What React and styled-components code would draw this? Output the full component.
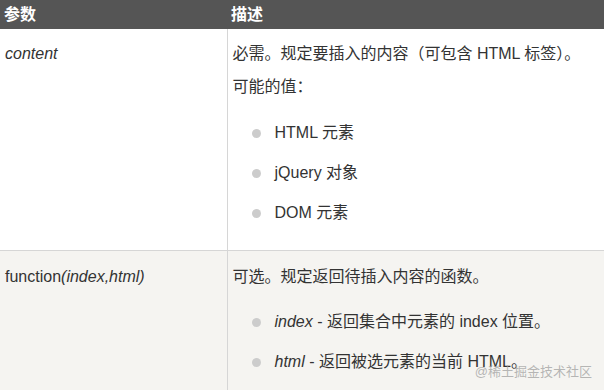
import React from "react";
import styled, { createGlobalStyle } from "styled-components";

const Global = createGlobalStyle`
  html, body { margin: 0; padding: 0; background: #ffffff; }
  body {
    font-family: "Liberation Sans", Arial, "Noto Sans CJK SC", sans-serif;
    font-size: 16px;
    color: #333333;
    overflow: hidden;
  }
`;

const Page = styled.div`
  position: relative;
  width: 604px;
  height: 390px;
  overflow: hidden;
`;

const Table = styled.table`
  width: 604px;
  border-collapse: collapse;
  table-layout: fixed;
`;

const HeadCell = styled.th`
  box-sizing: border-box;
  background: #555555;
  color: #ffffff;
  font-weight: bold;
  text-align: left;
  line-height: 24px;
  padding: 3px 4px 2px;
  width: ${(p) => p.$w || "auto"};
`;

const Row = styled.tr`
  background: ${(p) => (p.$alt ? "#f5f4f1" : "#ffffff")};
  border-bottom: 1px solid #d6d6d6;
`;

const Cell = styled.td`
  vertical-align: top;
  line-height: 24px;
  padding: ${(p) => p.$pt}px 5px ${(p) => p.$pb}px;
  border-left: ${(p) => (p.$divider ? "1px solid #d6d6d6" : "none")};
`;

const Para = styled.p`
  margin: ${(p) => p.$mt || 0}px 0 0;
`;

const List = styled.ul`
  list-style: none;
  margin: ${(p) => p.$mt}px 0 0;
  padding: 0 0 0 19px;
  display: flex;
  flex-direction: column;
  gap: 16px;
`;

const Item = styled.li`
  display: flex;
  align-items: center;
  gap: 14px;
  &::before {
    content: "";
    width: 9px;
    height: 9px;
    border-radius: 50%;
    background: #cccccc;
    flex: none;
  }
`;

const Em = styled.i`
  font-style: italic;
`;

const Watermark = styled.div`
  position: absolute;
  right: 12px;
  top: 364px;
  font-size: 13px;
  line-height: 16px;
  color: rgba(160, 160, 160, 0.75);
  font-family: "Liberation Sans", "Noto Sans CJK SC", sans-serif;
`;

export default function App() {
  return (
    <Page>
      <Global />
      <Table>
        <thead>
          <tr>
            <HeadCell $w="227px">参数</HeadCell>
            <HeadCell>描述</HeadCell>
          </tr>
        </thead>
        <tbody>
          <Row>
            <Cell $pt={13} $pb={25}>
              <Em>content</Em>
            </Cell>
            <Cell $pt={13} $pb={25} $divider>
              <Para>必需。规定要插入的内容（可包含 HTML 标签）。</Para>
              <Para $mt={9}>可能的值：</Para>
              <List $mt={22}>
                <Item>HTML 元素</Item>
                <Item>jQuery 对象</Item>
                <Item>DOM 元素</Item>
              </List>
            </Cell>
          </Row>
          <Row $alt>
            <Cell $pt={14} $pb={25}>
              function<Em>(index,html)</Em>
            </Cell>
            <Cell $pt={14} $pb={25} $divider>
              <Para>可选。规定返回待插入内容的函数。</Para>
              <List $mt={21}>
                <Item>
                  <span>
                    <Em>index</Em> - 返回集合中元素的 index 位置。
                  </span>
                </Item>
                <Item>
                  <span>
                    <Em>html</Em> - 返回被选元素的当前 HTML。
                  </span>
                </Item>
              </List>
            </Cell>
          </Row>
        </tbody>
      </Table>
      <Watermark>@稀土掘金技术社区</Watermark>
    </Page>
  );
}
